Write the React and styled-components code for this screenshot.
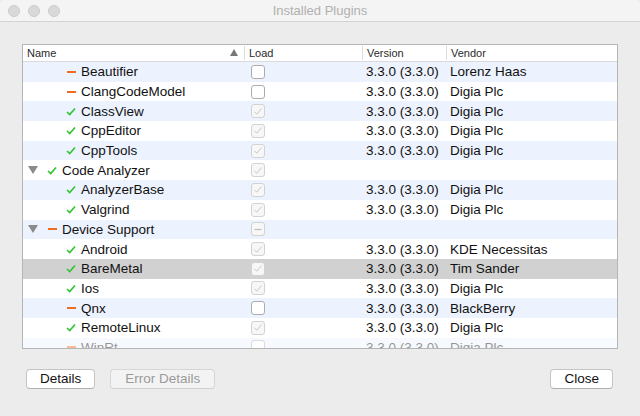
import React from "react";
import styled, { createGlobalStyle } from "styled-components";

const GlobalStyle = createGlobalStyle`
  html, body {
    margin: 0;
    padding: 0;
    background: #ececec;
  }
  body {
    font-family: "Liberation Sans", Arial, sans-serif;
  }
`;

const Window = styled.div`
  width: 640px;
  height: 416px;
  background: #ececec;
  display: flex;
  flex-direction: column;
  overflow: hidden;
  border-radius: 5px;
`;

const TitleBar = styled.div`
  height: 21px;
  flex: 0 0 21px;
  background: #f4f4f4;
  border-bottom: 1px solid #d3d3d3;
  display: flex;
  align-items: center;
  position: relative;
`;

const Lights = styled.div`
  display: flex;
  gap: 8px;
  padding-left: 8px;
`;

const Light = styled.span`
  width: 12px;
  height: 12px;
  border-radius: 50%;
  background: #d9d9d9;
  border: 0.5px solid #cbcbcb;
  box-sizing: border-box;
`;

const Title = styled.div`
  position: absolute;
  left: 0;
  right: 0;
  text-align: center;
  font-size: 13px;
  color: #b0b0b0;
`;

const Body = styled.div`
  flex: 1;
  padding: 22px 22px 0 22px;
  display: flex;
  flex-direction: column;
`;

const Table = styled.div`
  height: 305px;
  border: 1px solid #b5b5b5;
  background: #fff;
  overflow: hidden;
  box-sizing: border-box;
`;

const cols = "221px 118px 84px 1fr";

const Header = styled.div`
  display: grid;
  grid-template-columns: ${cols};
  height: 16px;
  border-bottom: 1px solid #dadada;
  font-size: 11px;
  color: #2a2a2a;
`;

const HeadCell = styled.div`
  display: flex;
  align-items: center;
  padding-left: 4px;
  border-left: ${p => (p.first ? "none" : "1px solid #dcdcdc")};
  margin: 1px 0;
  position: relative;
`;

const SortArrow = styled.span`
  position: absolute;
  right: 6px;
  top: 3px;
  width: 0;
  height: 0;
  border-left: 4px solid transparent;
  border-right: 4px solid transparent;
  border-bottom: 7px solid #777;
`;

const Row = styled.div`
  display: grid;
  grid-template-columns: ${cols};
  height: 19.7px;
  align-items: center;
  font-size: 13.5px;
  color: #111;
  background: ${p => (p.selected ? "#d1d1d1" : p.alt ? "#edf3fe" : "#fff")};
  opacity: ${p => (p.faded ? 0.45 : 1)};
`;

const NameCell = styled.div`
  display: flex;
  align-items: center;
  padding-left: ${p => (p.child ? 43 : 4)}px;
  white-space: nowrap;
`;

const Disclosure = styled.span`
  width: 0;
  height: 0;
  border-left: 5px solid transparent;
  border-right: 5px solid transparent;
  border-top: 8px solid #8a8a8a;
  margin: 0 9px 0 1px;
`;

const StatusBox = styled.span`
  width: 10px;
  margin-right: 5px;
  display: flex;
  align-items: center;
  justify-content: center;
`;

const Dash = styled.span`
  width: 9px;
  height: 2px;
  background: #f26b21;
`;

const LoadCell = styled.div`
  padding-left: 7px;
  display: flex;
  align-items: center;
`;

const Box = styled.span`
  width: 14px;
  height: 14px;
  box-sizing: border-box;
  border-radius: 3px;
  border: 1px solid ${p => (p.kind === "off" ? "#acacac" : "#d2d2d2")};
  background: ${p => (p.kind === "off" ? "#fff" : "#f7f7f7")};
  display: flex;
  align-items: center;
  justify-content: center;
`;

const TextCell = styled.div`
  padding-left: 4px;
  white-space: nowrap;
`;

const Buttons = styled.div`
  display: flex;
  align-items: center;
  padding: 20px 5px 0 4px;
  gap: 15px;
`;

const Button = styled.button`
  height: 20px;
  padding: 0 ${p => p.pad || 12}px;
  font-family: "Liberation Sans", Arial, sans-serif;
  font-size: 13.5px;
  color: ${p => (p.disabled ? "#9a9a9a" : "#111")};
  background: ${p => (p.disabled ? "#f3f3f3" : "#fff")};
  border: 1px solid ${p => (p.disabled ? "#d6d6d6" : "#c4c4c4")};
  border-bottom-color: ${p => (p.disabled ? "#d0d0d0" : "#b0b0b0")};
  border-radius: 4px;
  box-sizing: border-box;
  line-height: 18px;
`;

const Spacer = styled.div`
  flex: 1;
`;

const Check = ({ color = "#2ec52e", width = 1.6 }) => (
  <svg width="10" height="9" viewBox="0 0 10 9">
    <path d="M1 5 L3.7 7.6 L9 1.4" fill="none" stroke={color} strokeWidth={width} />
  </svg>
);

const CheckBox = ({ kind }) => (
  <Box kind={kind}>
    {kind === "on" && (
      <svg width="10" height="9" viewBox="0 0 10 9">
        <path d="M1.5 4.8 L3.8 7.2 L8.6 1.5" fill="none" stroke="#c9c9c9" strokeWidth="1" />
      </svg>
    )}
    {kind === "part" && (
      <svg width="10" height="9" viewBox="0 0 10 9">
        <path d="M1.5 4.5 L8.5 4.5" stroke="#bdbdbd" strokeWidth="1.2" />
      </svg>
    )}
  </Box>
);

const V = "3.3.0 (3.3.0)";

const plugins = [
  { name: "Beautifier", ok: false, load: "off", version: V, vendor: "Lorenz Haas" },
  { name: "ClangCodeModel", ok: false, load: "off", version: V, vendor: "Digia Plc" },
  { name: "ClassView", ok: true, load: "on", version: V, vendor: "Digia Plc" },
  { name: "CppEditor", ok: true, load: "on", version: V, vendor: "Digia Plc" },
  { name: "CppTools", ok: true, load: "on", version: V, vendor: "Digia Plc" },
  { name: "Code Analyzer", group: true, ok: true, load: "on" },
  { name: "AnalyzerBase", ok: true, load: "on", version: V, vendor: "Digia Plc" },
  { name: "Valgrind", ok: true, load: "on", version: V, vendor: "Digia Plc" },
  { name: "Device Support", group: true, ok: false, load: "part" },
  { name: "Android", ok: true, load: "on", version: V, vendor: "KDE Necessitas" },
  { name: "BareMetal", ok: true, load: "on", version: V, vendor: "Tim Sander", selected: true },
  { name: "Ios", ok: true, load: "on", version: V, vendor: "Digia Plc" },
  { name: "Qnx", ok: false, load: "off", version: V, vendor: "BlackBerry" },
  { name: "RemoteLinux", ok: true, load: "on", version: V, vendor: "Digia Plc" },
  { name: "WinRt", ok: false, load: "off", version: V, vendor: "Digia Plc", faded: true }
];

export default function App() {
  return (
    <>
      <GlobalStyle />
      <Window>
        <TitleBar>
          <Lights>
            <Light />
            <Light />
            <Light />
          </Lights>
          <Title>Installed Plugins</Title>
        </TitleBar>
        <Body>
          <Table>
            <Header>
              <HeadCell first>
                Name
                <SortArrow />
              </HeadCell>
              <HeadCell>Load</HeadCell>
              <HeadCell>Version</HeadCell>
              <HeadCell>Vendor</HeadCell>
            </Header>
            {plugins.map((p, i) => (
              <Row key={p.name} alt={i % 2 === 0} selected={p.selected} faded={p.faded}>
                <NameCell child={!p.group}>
                  {p.group && <Disclosure />}
                  <StatusBox>{p.ok ? <Check /> : <Dash />}</StatusBox>
                  {p.name}
                </NameCell>
                <LoadCell>
                  <CheckBox kind={p.load} />
                </LoadCell>
                <TextCell>{p.version}</TextCell>
                <TextCell>{p.vendor}</TextCell>
              </Row>
            ))}
          </Table>
          <Buttons>
            <Button pad={13}>Details</Button>
            <Button disabled pad={14}>Error Details</Button>
            <Spacer />
            <Button pad={13}>Close</Button>
          </Buttons>
        </Body>
      </Window>
    </>
  );
}
